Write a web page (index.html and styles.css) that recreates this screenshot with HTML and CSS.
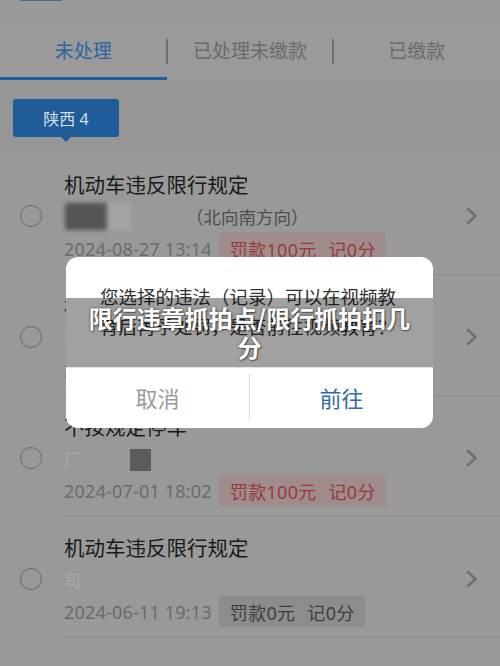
FILE: index.html
```html
<!DOCTYPE html>
<html lang="zh-CN">
<head>
<meta charset="utf-8">
<title>限行违章抓拍点</title>
<link rel="stylesheet" href="styles.css">
</head>
<body>
<div class="screen">
  <div class="topbar">
    <span class="sliver"></span>
    <div class="rule"></div>
  </div>
  <nav class="tabs">
    <div class="tab active">未处理</div>
    <div class="tab sep">已处理未缴款</div>
    <div class="tab sep">已缴款</div>
  </nav>
  <div class="filter">
    <span class="badge">陕西 4</span>
  </div>
  <ul class="list">
    <li class="item">
      <span class="radio"></span>
      <div class="body">
        <div class="content">
          <div class="title">机动车违反限行规定</div>
          <div class="loc"><span class="blur"><i class="dark"></i><i class="light"></i></span><span class="dir">（北向南方向）</span></div>
          <div class="meta"><span class="date">2024-08-27 13:14</span><span class="tag red">罚款100元<span class="gap"></span>记0分</span></div>
        </div>
        <svg class="chev" viewBox="0 0 12 18" width="12" height="18"><path d="M2 2l7.5 7-7.5 7" fill="none" stroke="currentColor" stroke-width="2.4" stroke-linecap="round" stroke-linejoin="round"/></svg>
      </div>
    </li>
    <li class="item">
      <span class="radio"></span>
      <div class="body">
        <div class="content">
          <div class="title">机动车违反限行规定</div>
          <div class="loc"><span class="faint">西</span></div>
          <div class="meta"><span class="date">2024-07-15 08:41</span><span class="tag red">罚款100元<span class="gap"></span>记0分</span></div>
        </div>
        <svg class="chev" viewBox="0 0 12 18" width="12" height="18"><path d="M2 2l7.5 7-7.5 7" fill="none" stroke="currentColor" stroke-width="2.4" stroke-linecap="round" stroke-linejoin="round"/></svg>
      </div>
    </li>
    <li class="item">
      <span class="radio"></span>
      <div class="body">
        <div class="content">
          <div class="title">不按规定停车</div>
          <div class="loc"><span class="faint">厂</span><span class="square"></span></div>
          <div class="meta"><span class="date">2024-07-01 18:02</span><span class="tag red">罚款100元<span class="gap"></span>记0分</span></div>
        </div>
        <svg class="chev" viewBox="0 0 12 18" width="12" height="18"><path d="M2 2l7.5 7-7.5 7" fill="none" stroke="currentColor" stroke-width="2.4" stroke-linecap="round" stroke-linejoin="round"/></svg>
      </div>
    </li>
    <li class="item">
      <span class="radio"></span>
      <div class="body">
        <div class="content">
          <div class="title">机动车违反限行规定</div>
          <div class="loc"><span class="faint">司</span></div>
          <div class="meta"><span class="date">2024-06-11 19:13</span><span class="tag gray">罚款0元<span class="gap"></span>记0分</span></div>
        </div>
        <svg class="chev" viewBox="0 0 12 18" width="12" height="18"><path d="M2 2l7.5 7-7.5 7" fill="none" stroke="currentColor" stroke-width="2.4" stroke-linecap="round" stroke-linejoin="round"/></svg>
      </div>
    </li>
  </ul>

  <div class="modal">
    <p class="msg">您选择的违法（记录）可以在视频教育后再予处罚，是否前往视频教育？</p>
    <div class="actions">
      <button class="btn cancel">取消</button>
      <button class="btn go">前往</button>
    </div>
    <h1 class="caption">限行违章抓拍点/限行抓拍扣几分</h1>
  </div>
</div>
</body>
</html>
```
FILE: styles.css
```css
* { box-sizing: border-box; }
html, body { margin: 0; padding: 0; }
body {
  width: 500px;
  height: 666px;
  overflow: hidden;
  background: #999999;
  font-family: "Noto Sans", "Noto Sans CJK SC", sans-serif;
}
.screen {
  position: relative;
  width: 500px;
  height: 666px;
  background: #999999;
}

.topbar {
  height: 23px;
  display: flex;
  flex-direction: column;
  justify-content: space-between;
}
.sliver {
  display: block;
  margin-left: 20px;
  width: 42px;
  height: 1px;
  background: #4f6b8e;
}
.rule {
  margin: 0 27px 0 26px;
  height: 1px;
  background: #949494;
}

.tabs {
  display: grid;
  grid-template-columns: 1fr 1fr 1fr;
  height: 57px;
  background: #9a9a9a;
}
.tab {
  position: relative;
  display: flex;
  align-items: center;
  justify-content: center;
  padding-bottom: 4px;
  font-size: 19px;
  color: #6a6a6a;
}
.tab.active {
  color: #2a64a0;
  box-shadow: inset 0 -3px 0 #1f5e9d;
}
.tab.sep::before {
  content: "";
  position: absolute;
  left: -1px;
  top: 16px;
  width: 2px;
  height: 25px;
  background: #6f6f6f;
}

.filter {
  height: 74px;
  padding: 19px 0 0 13px;
  background: #969696;
}
.badge {
  position: relative;
  display: inline-flex;
  align-items: center;
  justify-content: center;
  width: 106px;
  height: 38px;
  border-radius: 3px;
  background: #1d5b99;
  color: #d9e0e8;
  font-size: 16px;
}
.badge::after {
  content: "";
  position: absolute;
  left: 48px;
  bottom: -5px;
  border-left: 5px solid transparent;
  border-right: 5px solid transparent;
  border-top: 5px solid #1d5b99;
}

.list {
  list-style: none;
  margin: 0;
  padding: 0;
  background: #999999;
}
.item {
  display: flex;
  align-items: center;
  height: 121px;
}
.radio {
  flex: none;
  width: 22px;
  height: 22px;
  margin: 3px 22px 0 20px;
  border: 1.6px solid #6b6b6b;
  border-radius: 50%;
}
.body {
  flex: 1;
  display: flex;
  align-items: center;
  height: 121px;
  border-bottom: 1px solid #8b8b8b;
}
.content {
  flex: 1;
  align-self: flex-start;
  padding-top: 17px;
}
.title {
  height: 28px;
  line-height: 28px;
  font-size: 20.5px;
  color: #1a1a1a;
  white-space: nowrap;
}
.loc {
  height: 34px;
  display: flex;
  align-items: center;
  font-size: 17.5px;
  color: #4d4d4d;
}
.blur {
  display: flex;
  width: 66px;
  height: 27px;
  margin-left: 1px;
  filter: blur(2px);
}
.blur .dark { width: 42px; background: #555555; }
.blur .light { width: 24px; background: #a4a4a4; }
.dir { margin-left: 55px; }
.faint { color: #a9a9a9; font-size: 17px; }
.square {
  width: 21px;
  height: 22px;
  margin: 4px 0 0 49px;
  background: #5b5b5b;
}
.meta {
  height: 31px;
  display: flex;
  align-items: center;
}
.date {
  font-size: 18px;
  letter-spacing: 0.2px;
  color: #6b6b6b;
}
.tag {
  display: inline-flex;
  align-items: center;
  height: 31px;
  margin-left: 7px;
  padding: 0 10px 0 11px;
  font-size: 18px;
  letter-spacing: 0.3px;
}
.tag.red { background: #a08c8c; color: #963b3b; }
.tag.gray { background: #8c8c8c; color: #3e3e3e; }
.gap { display: inline-block; width: 12px; }
.chev {
  flex: none;
  margin: 3px 22px 0 0;
  color: #6e6e6e;
}

.modal {
  position: absolute;
  left: 66px;
  top: 257px;
  width: 367px;
  height: 171px;
  border-radius: 12px;
  background: #ffffff;
  overflow: hidden;
}
.msg {
  margin: 0;
  height: 110px;
  padding: 25px 34px 0 34px;
  font-size: 18.5px;
  line-height: 30px;
  color: #333333;
}
.actions {
  display: grid;
  grid-template-columns: 184px 1fr;
  height: 61px;
  padding: 5px 0 8px;
  border-top: 1px solid #e4e4e4;
}
.btn {
  border: none;
  background: none;
  padding: 0;
  font-family: inherit;
  font-size: 22px;
}
.btn.cancel { color: #9a9a9a; border-right: 1px solid #dcdcdc; }
.btn.go { color: #2f6aa6; }

.caption {
  position: absolute;
  left: 0;
  top: 41px;
  width: 367px;
  height: 69px;
  margin: 0;
  padding: 5px 16px 0;
  background: rgba(0, 0, 0, 0.37);
  color: #ffffff;
  font-family: "Noto Sans CJK SC", sans-serif;
  font-weight: 700;
  font-size: 24px;
  line-height: 29px;
  text-align: center;
  text-shadow: 0 0 3px rgba(0, 0, 0, 0.55), 1px 1px 1px rgba(0, 0, 0, 0.4);
}
```
